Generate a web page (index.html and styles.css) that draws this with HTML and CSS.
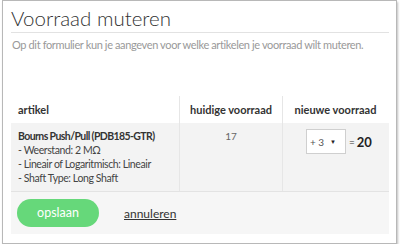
FILE: index.html
```html
<!DOCTYPE html>
<html>
<head>
<meta charset="utf-8">
<link rel="stylesheet" href="styles.css">
</head>
<body>
<div class="frame">
  <h1 class="title">Voorraad muteren</h1>
  <p class="intro">Op dit formulier kun je aangeven voor welke artikelen je voorraad wilt muteren.</p>
  <div class="table">
    <div class="row head">
      <div class="cell c1">artikel</div>
      <div class="cell c2">huidige voorraad</div>
      <div class="cell c3">nieuwe voorraad</div>
    </div>
    <div class="row body">
      <div class="cell c1">
        <div class="name">Bourns Push/Pull (PDB185-GTR)</div>
        <div class="spec">- Weerstand: 2 MΩ</div>
        <div class="spec">- Lineair of Logaritmisch: Lineair</div>
        <div class="spec">- Shaft Type: Long Shaft</div>
      </div>
      <div class="cell c2"><span class="stock">17</span></div>
      <div class="cell c3">
        <div class="mut">
          <div class="select"><span>+ 3</span><span class="arrow">▼</span></div>
          <span class="eq">=</span><span class="total">20</span>
        </div>
      </div>
    </div>
  </div>
  <div class="footer">
    <span class="btn">opslaan</span>
    <a class="cancel">annuleren</a>
  </div>
</div>
</body>
</html>
```
FILE: styles.css
```css
html, body {
  margin: 0;
  padding: 0;
  background: #ffffff;
}
body {
  font-family: Lato, "Open Sans", sans-serif;
  color: #333;
}
.frame {
  box-sizing: border-box;
  width: 395px;
  height: 244px;
  margin-left: 2px;
  border: 1px solid #b8b8b8;
  box-shadow: 1px 2px 2px rgba(0,0,0,0.25);
  padding: 0 7px 0 8px;
  background: #fff;
}
.title {
  margin: 0;
  padding-top: 4px;
  height: 27px;
  font-size: 20.5px;
  line-height: 26px;
  font-weight: 300;
  color: #333;
  border-bottom: 1px solid #e2e2e2;
}
.intro {
  margin: 5px 0 0 1px;
  font-size: 11px;
  letter-spacing: -0.37px;
  line-height: 14px;
  color: #999;
  font-weight: 400;
  white-space: nowrap;
}
.table {
  margin-top: 44px;
}
.row {
  display: grid;
  grid-template-columns: 169px 103px 105px;
}
.head {
  height: 27px;
  background: #fff;
}
.head .cell {
  font-size: 11px;
  font-weight: 700;
  line-height: 26px;
  padding-top: 1px;
}
.head .c1 { padding-left: 7px; }
.head .c2, .head .c3 { text-align: center; }
.c1 { border-right: 1px solid #e6e6e6; }
.c2 { border-right: 1px solid #e6e6e6; }
.body {
  height: 68px;
  background: #f3f3f3;
  border-bottom: 1px solid #e3e3e3;
}
.body .c1 {
  padding: 6px 0 0 7px;
  font-size: 10.5px;
  letter-spacing: -0.4px;
  line-height: 14px;
  color: #444;
}
.name {
  font-weight: 700;
  color: #333;
  letter-spacing: -0.6px;
}
.body .c2 {
  text-align: center;
  padding-top: 6px;
  font-size: 10px;
  line-height: 14px;
  color: #666;
}
.body .c3 {
  padding-top: 6px;
  padding-left: 23px;
}
.mut {
  display: flex;
  align-items: center;
}
.select {
  box-sizing: border-box;
  width: 40px;
  height: 25px;
  background: #fff;
  border: 1px solid #cfcfcf;
  display: flex;
  align-items: center;
  justify-content: space-between;
  padding: 0 9px 0 3px;
  font-size: 10px;
  color: #555;
}
.arrow {
  font-size: 6px;
  color: #222;
}
.eq {
  margin-left: 3px;
  font-size: 10px;
  color: #333;
}
.total {
  margin-left: 2px;
  font-size: 13px;
  font-weight: 700;
  color: #222;
}
.footer {
  height: 42px;
  background: #f6f6f6;
  display: flex;
  align-items: center;
  padding-left: 6px;
}
.btn {
  display: inline-block;
  width: 82px;
  height: 28px;
  line-height: 28px;
  border-radius: 14px;
  background: #66d87a;
  color: #fff;
  text-align: center;
  font-size: 12.5px;
}
.cancel {
  margin-left: 25px;
  font-size: 12px;
  color: #333;
  text-decoration: underline;
}
```
